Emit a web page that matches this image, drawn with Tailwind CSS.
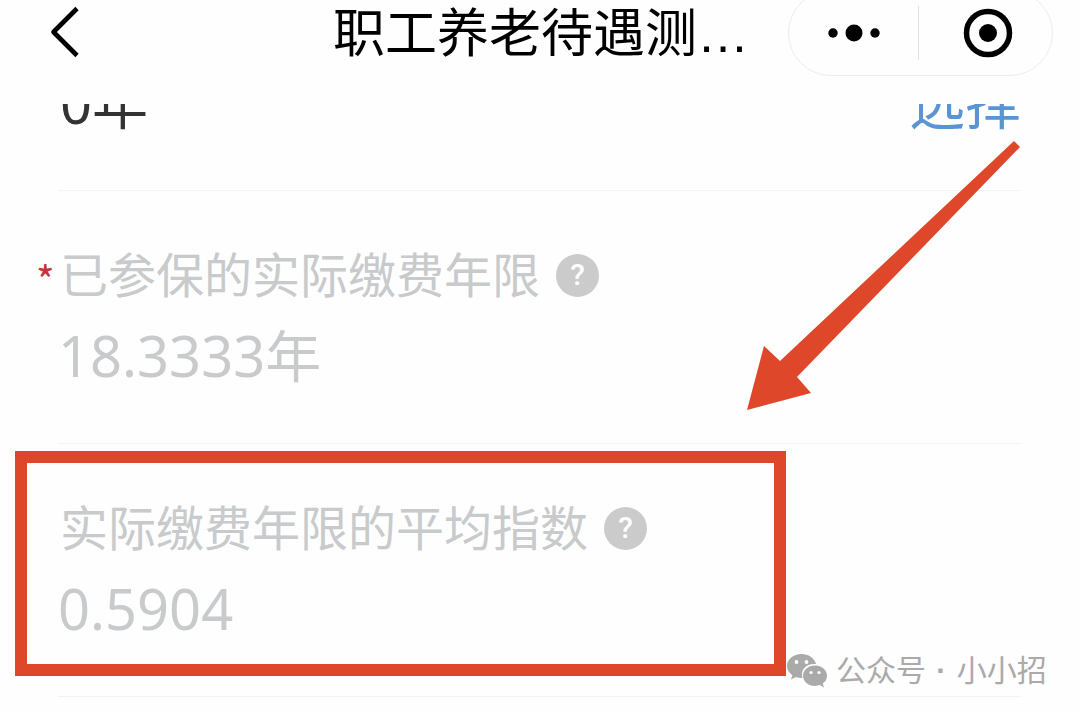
<!DOCTYPE html>
<html lang="zh-CN">
<head>
<meta charset="utf-8">
<meta name="viewport" content="width=device-width, initial-scale=1">
<title>职工养老待遇测算</title>
<script src="https://cdn.jsdelivr.net/npm/@tailwindcss/browser@4"></script>
</head>
<body class="relative min-h-screen overflow-x-hidden bg-[#fefefe] font-['Noto_Sans','Noto_Sans_CJK_SC',sans-serif]">
  <header class="grid h-[104px] grid-cols-[1fr_auto_1fr] items-start">
    <button type="button" aria-label="返回" class="ml-12 mt-1 flex h-14 w-8 items-center justify-start">
      <svg class="h-14 w-8" viewBox="0 0 32 56" fill="none" stroke="#000" stroke-width="4.6"><path d="M29 4.5 5.500 28 29 51.500" stroke-linejoin="round"/></svg>
    </button>
    <h1 class="pl-0.5 pt-1 text-[52px] leading-[60px] text-black font-['Liberation_Sans','Noto_Sans_CJK_SC',sans-serif]">职工养老待遇测…</h1>
    <div class="-mt-[10px] mr-[27px] flex h-[86px] w-[265px] items-center justify-self-end rounded-full border border-[#ececec]">
      <button type="button" aria-label="更多" class="flex h-full flex-1 items-center justify-center">
        <svg class="h-5 w-14" viewBox="0 0 56 20"><circle cx="7" cy="10" r="4.700"/><circle cx="28" cy="10" r="8.500"/><circle cx="49" cy="10" r="4.700"/></svg>
      </button>
      <span class="h-[54px] w-px bg-[#e2e2e2]"></span>
      <button type="button" aria-label="关闭" class="flex h-full flex-1 items-center justify-center pl-1">
        <svg class="size-[50px]" viewBox="0 0 50 50"><circle cx="25" cy="25" r="21.500" fill="none" stroke="#000" stroke-width="5.500"/><circle cx="25" cy="25" r="9"/></svg>
      </button>
    </div>
  </header>

  <main class="pl-[58px] pr-[59px]">
    <section class="flex h-[87px] items-end justify-between overflow-hidden border-b border-[#f3f3f3] pb-14 text-[56px] leading-[64px]">
      <p class="pl-0.5 text-[#333]">0年</p>
      <button type="button" class="text-[#5b94d3]">选择</button>
    </section>

    <section class="relative border-b border-[#f3f3f3] pb-14 pt-[52px] text-[#c8cacb]">
      <span class="absolute -left-[22px] top-[68px] text-[40px] leading-10 text-[#c8313f] font-['Noto_Sans_CJK_SC',sans-serif]">*</span>
      <div class="flex items-center gap-4 pl-0.5">
        <h2 class="text-[48px] leading-[64px]">已参保的实际缴费年限</h2>
        <button type="button" aria-label="实际缴费年限说明" class="flex size-[43px] items-center justify-center rounded-full bg-[#cbcbcb] text-[30px] font-medium leading-none text-white font-['Roboto',sans-serif]">?</button>
      </div>
      <p class="mt-4 text-[56px] leading-[64px]">18.3333年</p>
    </section>

    <section class="relative border-b border-[#f3f3f3] pb-14 pt-[52px] text-[#c8cacb]">
      <div class="absolute -left-[43px] top-[7px] h-[225px] w-[771px] border-12 border-[#df472b]"></div>
      <div class="flex items-center gap-4 pl-0.5">
        <h2 class="text-[48px] leading-[64px]">实际缴费年限的平均指数</h2>
        <button type="button" aria-label="平均指数说明" class="flex size-[43px] items-center justify-center rounded-full bg-[#cbcbcb] text-[30px] font-medium leading-none text-white font-['Roboto',sans-serif]">?</button>
      </div>
      <p class="mt-4 text-[56px] leading-[64px]">0.5904</p>
    </section>
  </main>

  <svg class="pointer-events-none absolute left-[746px] top-[140px] h-[272px] w-[276px]" viewBox="0 0 276 272" aria-hidden="true">
    <path fill="#df472b" d="M268 1 274 7 51 237 65 253 1 270 18 206 34 221Z"/>
  </svg>

  <div class="absolute left-[786px] top-[648px] flex items-center gap-2 text-[30px] leading-[42px] text-[#aaa] font-['Liberation_Sans','Noto_Sans_CJK_SC',sans-serif]">
    <svg class="h-9 w-[42px]" viewBox="0 0 42 36" aria-hidden="true">
      <path fill="#aaa" d="M15.500 2C7.500 2 1 7.300 1 14c0 3.800 2 7 5.300 9.200L5 27.500l5-2.500c1.800.6 3.600.9 5.500.9h1C14 17 21 11 30 12 28.500 6 22.500 2 15.500 2Z"/>
      <path fill="#aaa" d="M29 13.500c-6.800 0-12 4.500-12 10.200s5.200 10.200 12 10.200c1.600 0 3.200-.3 4.600-.8l4.400 2.400-1.200-3.900c2.600-1.900 4.200-4.700 4.200-7.900 0-5.700-5.200-10.200-12-10.200Z"/>
      <g fill="#fff"><circle cx="10.500" cy="10" r="1.900"/><circle cx="20.500" cy="10" r="1.900"/><circle cx="25" cy="20.500" r="1.600"/><circle cx="33" cy="20.500" r="1.600"/></g>
    </svg>
    <span class="pt-0.5">公众号 <span class="px-0.5 font-bold">·</span> 小小招</span>
  </div>
</body>
</html>
